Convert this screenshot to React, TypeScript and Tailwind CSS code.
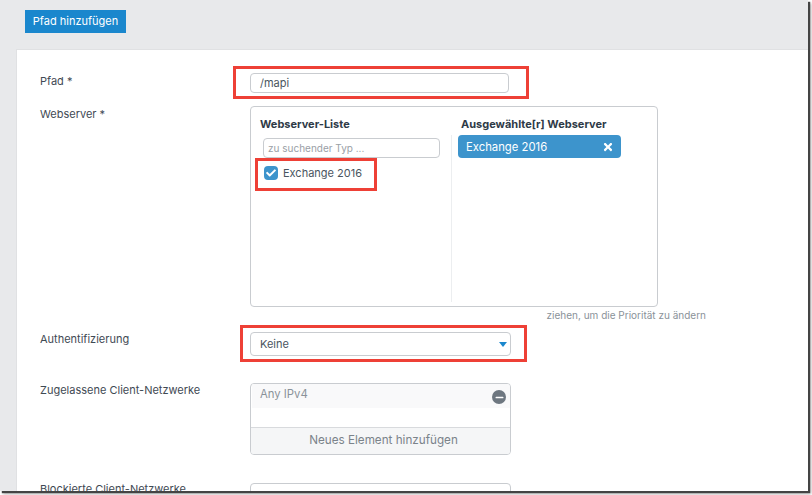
import { FaCheck, FaMinus, FaTimes } from "react-icons/fa";

const font = "font-['Inter','Noto_Sans',sans-serif]";

function Label({ children, className = "" }: { children: React.ReactNode; className?: string }) {
  return <div className={`w-[210px] shrink-0 text-[11px] leading-4 text-[#3f4a54] ${className}`}>{children}</div>;
}

function WebserverPicker() {
  return (
    <div className="flex h-[201px] w-[408px] rounded border border-[#c9ccd0] bg-white">
      <div className="w-[200px] shrink-0 pl-[9px] pt-[9px]">
        <div className="text-[11px] leading-4 font-bold text-[#2e3a47]">Webserver-Liste</div>
        <div className="mt-[6px] ml-[3px] flex h-[20px] w-[177px] items-center rounded border border-[#c9ccd0] px-1 text-[10px] text-[#9aa0a6]">
          zu suchender Typ ...
        </div>
        <div className="mt-[7px] ml-[4px] flex items-center gap-[5px] text-[11px] text-[#4a5560]">
          <span className="flex h-[14px] w-[14px] items-center justify-center rounded-sm bg-[#3d94cc]">
            <FaCheck size={10} color="white" />
          </span>
          Exchange 2016
        </div>
      </div>
      <div className="mt-[28px] mb-[4px] border-l border-[#eceef0]" />
      <div className="flex-1 pl-[6px] pt-[9px]">
        <div className="pl-[3px] text-[11px] leading-4 font-bold text-[#2e3a47]">Ausgewählte[r] Webserver</div>
        <div className="mt-[3px] flex h-[23px] w-[163px] items-center justify-between rounded bg-[#3d94cc] pl-2 pr-[7px] pt-[2px] text-[11.3px] text-white">
          Exchange 2016
          <FaTimes size={12} className="-mt-[2px]" />
        </div>
      </div>
    </div>
  );
}

export default function App() {
  return (
    <div className={`h-[495px] w-[812px] overflow-hidden bg-white ${font}`}>
      <div className="relative h-[491px] w-[808px] overflow-hidden bg-[#e8e9eb] shadow-[2px_2px_1px_#444,3px_3px_3px_#aaa]">
        <div className="flex h-[49px] items-start pl-[25px] pt-[10px]">
          <button className="h-[23px] w-[101px] bg-[#1a87cd] text-[11px] text-white">Pfad hinzufügen</button>
        </div>
        <div className="ml-[16px] h-[442px] border-t border-l border-[#e0e1e3] bg-white pl-[23px] pt-[23px]">
          <div className="flex">
            <Label>Pfad *</Label>
            <div className="flex h-[20px] w-[259px] items-center rounded border border-[#c9ccd0] pl-[9px] text-[11px] text-[#4a5560]">
              /mapi
            </div>
          </div>
          <div className="mt-[13px] flex">
            <Label>Webserver *</Label>
            <div>
              <WebserverPicker />
              <div className="mt-[1px] w-[456px] text-right text-[10px] leading-[14px] text-[#8a9299]">
                ziehen, um die Priorität zu ändern
              </div>
            </div>
          </div>
          <div className="mt-[10px] flex">
            <Label className="-mt-px">Authentifizierung</Label>
            <div className="flex h-[24px] w-[261px] items-center justify-between rounded border border-[#c9ccd0] pl-[9px] pr-[3px] text-[11px] text-[#4a5560]">
              Keine
              <span className="h-0 w-0 border-x-[4px] border-t-[5px] border-x-transparent border-t-[#1a87cd]" />
            </div>
          </div>
          <div className="mt-[27px] flex">
            <Label className="-mt-px">Zugelassene Client-Netzwerke</Label>
            <div className="h-[72px] w-[261px] overflow-hidden rounded border border-[#c9ccd0]">
              <div className="ml-[1px] flex h-[24px] items-start justify-between bg-[#f9f9fa] pl-[8px] pr-[4px] pt-[2px] text-[11.3px] text-[#8a9299]">
                Any IPv4
                <span className="mt-[4px] flex h-[14px] w-[14px] items-center justify-center rounded-full bg-[#6e7780]">
                  <FaMinus size={9} color="white" />
                </span>
              </div>
              <div className="h-[19px]" />
              <div className="flex h-[27px] items-center justify-center border-t border-[#d8dadd] bg-[#f5f6f7] pl-[6px] text-[11.7px] text-[#7b838a]">
                Neues Element hinzufügen
              </div>
            </div>
          </div>
          <div className="mt-[28px] flex">
            <Label className="-mt-[2px]">Blockierte Client-Netzwerke</Label>
            <div className="h-[40px] w-[261px] rounded border border-[#c9ccd0]" />
          </div>
        </div>
        <div className="absolute left-[233px] top-[66px] h-[33px] w-[296px] border-[3px] border-[#ee4036]" />
        <div className="absolute left-[255px] top-[158px] h-[33px] w-[122px] border-[3px] border-[#ee4036]" />
        <div className="absolute left-[240px] top-[325px] h-[37px] w-[287px] border-[3px] border-[#ee4036]" />
      </div>
    </div>
  );
}
